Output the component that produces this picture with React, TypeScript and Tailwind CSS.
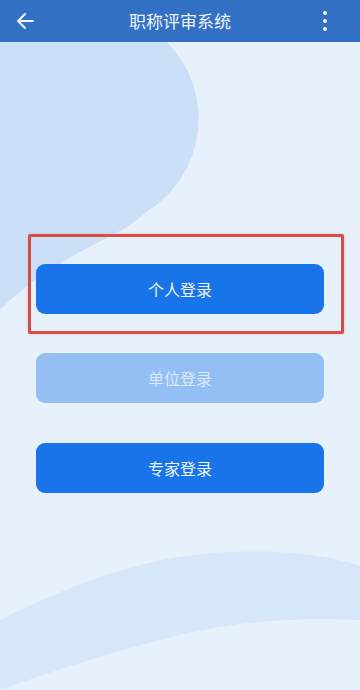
import { FC } from "react";

const font = { fontFamily: '"Noto Sans CJK SC", "Noto Sans", sans-serif' };

type LoginButtonProps = {
  label: string;
  disabled?: boolean;
};

const LoginButton: FC<LoginButtonProps> = ({ label, disabled = false }) => (
  <button
    type="button"
    className={
      disabled
        ? "h-[50px] w-full rounded-[9px] bg-[#94bff4] text-[16px] text-[#dbe9fb]"
        : "h-[50px] w-full rounded-[9px] bg-[#1a74e9] text-[16px] text-[#eef5ff]"
    }
  >
    {label}
  </button>
);

const Background: FC = () => (
  <svg
    className="absolute inset-0 h-full w-full"
    viewBox="0 0 360 690"
    preserveAspectRatio="none"
  >
    <rect width="360" height="690" fill="#e7f1fc" />
    <path
      d="M0 42 L167 42 A109 109 0 0 1 146 212 C120 240 60 250 0 310 Z"
      fill="#cbe0f8"
    />
    <path
      d="M0 620 C80 580 150 555 230 552 C290 550 330 556 360 566 L360 620 C300 618 240 620 180 635 C110 652 50 672 0 690 Z"
      fill="#d6e7f9"
    />
  </svg>
);

export default function App() {
  return (
    <div className="relative h-[690px] w-[360px] overflow-hidden" style={font}>
      <Background />

      <header className="relative grid h-[42px] grid-cols-[1fr_auto_1fr] items-center bg-[#3170c2] px-4">
        <svg width="18" height="18" viewBox="0 0 18 18" fill="none">
          <path
            d="M17 9 H2 M9 2 L2 9 L9 16"
            stroke="#f2f6fc"
            strokeWidth="2"
            strokeLinecap="round"
            strokeLinejoin="round"
          />
        </svg>
        <h1 className="text-[17px] text-[#eef4fb]">职称评审系统</h1>
        <div className="mr-[17px] flex flex-col items-center gap-[4px] justify-self-end">
          <span className="h-[4px] w-[4px] rounded-full bg-[#eef4fb]" />
          <span className="h-[4px] w-[4px] rounded-full bg-[#eef4fb]" />
          <span className="h-[4px] w-[4px] rounded-full bg-[#eef4fb]" />
        </div>
      </header>

      <main className="relative flex flex-col gap-[39px] px-9 pt-[222px]">
        <div className="relative">
          <div className="pointer-events-none absolute -left-[8px] -right-[20px] -top-[30px] -bottom-[20px] rounded-[2px] border-[3px] border-[#d24e47] shadow-[0_0_3px_#f3b1ad]" />
          <LoginButton label="个人登录" />
        </div>
        <LoginButton label="单位登录" disabled />
        <div className="pt-px">
          <LoginButton label="专家登录" />
        </div>
      </main>
    </div>
  );
}
